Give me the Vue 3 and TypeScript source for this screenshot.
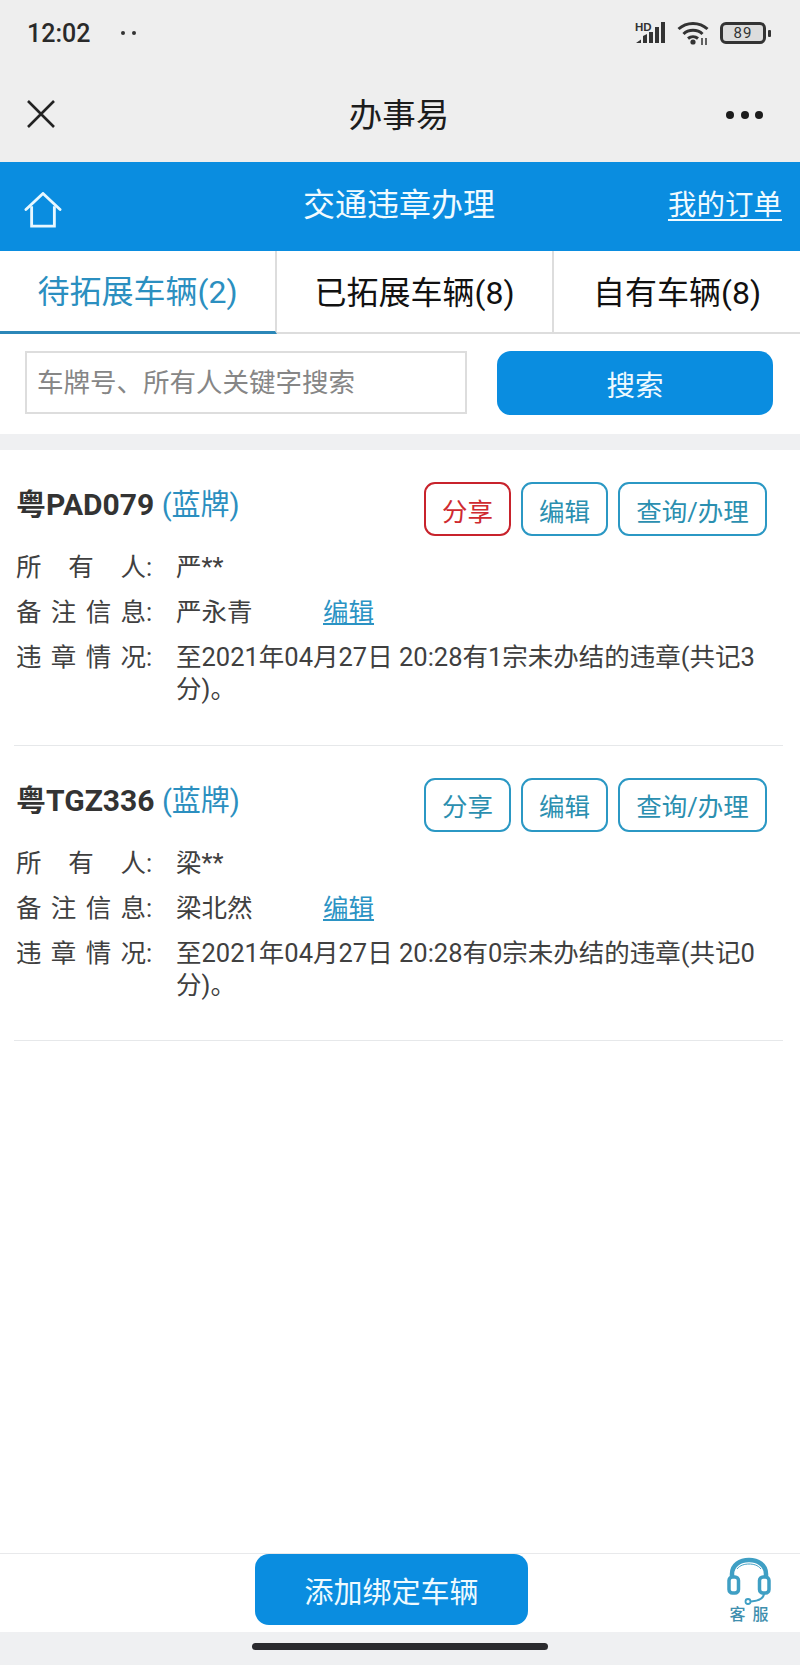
<script setup lang="ts">
interface Vehicle {
  plate: string
  owner: string
  note: string
  count: string
  points: string
  alert: boolean
}

const tabs = ['待拓展车辆(2)', '已拓展车辆(8)', '自有车辆(8)']
const vehicles: Vehicle[] = [
  { plate: '粤PAD079', owner: '严**', note: '严永青', count: '1', points: '3', alert: true },
  { plate: '粤TGZ336', owner: '梁**', note: '梁北然', count: '0', points: '0', alert: false },
]
</script>

<template>
  <div class="page">
    <div class="status">
      <span class="time">12:02</span>
      <span class="status-dots"><i></i><i></i></span>
      <span class="grow"></span>
      <svg class="signal" width="32" height="24" viewBox="0 0 32 24">
        <text x="0" y="10" class="hd">HD</text>
        <path d="M1 22l5-3.500V22z M8 22v-7l4-2v9z M14 22V11h4v11z M20 22V6h4v16z M26 22V1h4v21z" fill="#333" />
      </svg>
      <svg class="wifi" width="34" height="24" viewBox="0 0 34 24">
        <g fill="none" stroke="#333" stroke-width="3">
          <path d="M1.500 8C9.500 .5 22.500 .5 30.500 8" />
          <path d="M6.500 13C11.500 8 20.500 8 25.500 13" />
          <path d="M11 17.500C14 15 18 15 21 17.500" />
        </g>
        <circle cx="16" cy="21" r="2.600" fill="#333" />
        <path d="M25 24v-7M29 24v-7" stroke="#333" stroke-width="1.500" />
      </svg>
      <div class="battery"><span>89</span></div>
      <span class="tip"></span>
    </div>

    <div class="nav">
      <svg class="close" width="30" height="28" viewBox="0 0 30 28">
        <path d="M2 1l26 26M28 1L2 27" stroke="#222" stroke-width="2.600" fill="none" />
      </svg>
      <span class="nav-title">办事易</span>
      <span class="more"><i></i><i></i><i></i></span>
    </div>

    <header class="header">
      <svg class="home" width="38" height="36" viewBox="0 0 40 38">
        <path d="M2 18.500L20 1.500l18 17" fill="none" stroke="#e8f8ff" stroke-width="3" stroke-linecap="round" stroke-linejoin="round" />
        <path d="M8 15v21h24V15" fill="none" stroke="#e8f8ff" stroke-width="3" />
      </svg>
      <span class="header-title">交通违章办理</span>
      <a class="orders">我的订单</a>
    </header>

    <nav class="tabs">
      <div v-for="(tab, i) in tabs" :key="tab" class="tab" :class="{ active: i === 0 }"><span class="tab-text">{{ tab }}</span></div>
    </nav>

    <div class="search">
      <input class="search-input" placeholder="车牌号、所有人关键字搜索" />
      <button class="search-btn">搜索</button>
    </div>

    <div class="band"></div>

    <section v-for="v in vehicles" :key="v.plate" class="card">
      <div class="card-head">
        <div class="title"><b>{{ v.plate }}</b> <span class="plate-color">(蓝牌)</span></div>
        <div class="actions">
          <button class="act share" :class="{ alert: v.alert }">分享</button>
          <button class="act edit">编辑</button>
          <button class="act query">查询/办理</button>
        </div>
      </div>
      <div class="row">
        <div class="label"><span class="spread"><i>所</i><i>有</i><i>人</i></span>:</div>
        <div class="value">{{ v.owner }}</div>
      </div>
      <div class="row">
        <div class="label"><span class="spread"><i>备</i><i>注</i><i>信</i><i>息</i></span>:</div>
        <div class="value note"><span class="note-text">{{ v.note }}</span><a class="link">编辑</a></div>
      </div>
      <div class="row last">
        <div class="label"><span class="spread"><i>违</i><i>章</i><i>情</i><i>况</i></span>:</div>
        <div class="value">至2021年04月27日 20:28有{{ v.count }}宗未办结的违章(共记{{ v.points }}分)。</div>
      </div>
    </section>

    <div class="grow"></div>

    <footer class="footer">
      <button class="add-btn">添加绑定车辆</button>
      <div class="service">
        <svg width="46" height="48" viewBox="0 0 46 48">
          <path d="M6 21V17C6 8 14 3 23 3s17 5 17 14v4" fill="none" stroke="#3f9fc4" stroke-width="4.500" />
          <path d="M11 12C14 8 19 7 23 7s9 1 12 5" fill="none" stroke="#3f9fc4" stroke-width="1" />
          <rect x="3" y="20" width="9.500" height="16" rx="3.500" fill="#fff" stroke="#3f9fc4" stroke-width="3.500" />
          <rect x="33.500" y="20" width="9.500" height="16" rx="3.500" fill="#fff" stroke="#3f9fc4" stroke-width="3.500" />
          <path d="M38 36c0 5-5 8-13 8.500" fill="none" stroke="#3f9fc4" stroke-width="2" />
          <circle cx="22" cy="44.500" r="2.500" fill="#fff" stroke="#3f9fc4" stroke-width="1.800" />
        </svg>
        <span class="service-text">客 服</span>
      </div>
    </footer>

    <div class="home-area"><span class="home-bar"></span></div>
  </div>
</template>

<style>
body {
  margin: 0;
  background: #fff;
}
</style>

<style scoped>
.page {
  width: 800px;
  height: 1665px;
  display: flex;
  flex-direction: column;
  background: #fff;
  overflow: hidden;
  font-family: Roboto, "Noto Sans CJK SC", sans-serif;
  color: #333;
}
.grow {
  flex: 1;
}
button {
  font-family: inherit;
  cursor: pointer;
  padding: 0;
}
i {
  font-style: normal;
}

.status {
  height: 66px;
  padding: 0 29px 0 27px;
  display: flex;
  align-items: center;
  background: #eee;
  box-sizing: border-box;
}
.time {
  font-size: 25px;
  font-weight: 500;
  color: #2a2a2a;
}
.status-dots {
  display: flex;
  gap: 7px;
  margin-left: 31px;
}
.status-dots i {
  width: 4px;
  height: 4px;
  border-radius: 50%;
  background: #333;
}
.signal {
  margin-right: 10px;
  overflow: visible;
}
.hd {
  font: 700 11.500px "Liberation Sans", sans-serif;
  fill: #333;
}
.wifi {
  margin-right: 9px;
}
.battery {
  width: 46px;
  height: 22px;
  box-sizing: border-box;
  border: 3px solid #333;
  border-radius: 6px;
  background: #ddd;
  display: flex;
  align-items: center;
  justify-content: center;
  font-size: 15px;
  line-height: 16px;
  color: #333;
  letter-spacing: 1px;
}
.tip {
  width: 3px;
  height: 7px;
  margin-left: 2px;
  border-radius: 1px;
  background: #333;
}

.nav {
  height: 96px;
  padding: 0 37px 0 26px;
  box-sizing: border-box;
  display: grid;
  grid-template-columns: 1fr auto 1fr;
  align-items: center;
  background: #eee;
}
.nav-title {
  font-size: 33.500px;
  color: #1c1c1c;
  line-height: 1;
  margin: 3px 0 0 9px;
}
.more {
  justify-self: end;
  display: flex;
  gap: 6.500px;
  margin-top: 2px;
}
.more i {
  width: 8px;
  height: 8px;
  border-radius: 50%;
  background: #1c1c1c;
}

.header {
  height: 89px;
  padding: 0 18px 0 24px;
  box-sizing: border-box;
  display: grid;
  grid-template-columns: 1fr auto 1fr;
  align-items: center;
  background: #0a8de0;
  color: #f1fbff;
}
.home {
  margin-top: 7px;
}
.header-title {
  font-size: 32px;
  line-height: 1;
  margin-left: -8px;
  margin-top: -4px;
}
.orders {
  justify-self: end;
  font-size: 28.500px;
  line-height: 1;
  margin-top: -1px;
  text-decoration: underline;
  text-underline-offset: 4px;
}

.tabs {
  height: 83px;
  display: grid;
  grid-template-columns: 277px 277px 1fr;
  box-sizing: border-box;
  border-bottom: 2px solid #ddd;
}
.tab {
  height: 83px;
  box-sizing: border-box;
  display: flex;
  align-items: center;
  justify-content: center;
  font-size: 32px;
  color: #111;
  border-right: 2px solid #ddd;
  white-space: nowrap;
}
.tab-text {
  margin-top: -5px;
}
.tab:last-child {
  border-right: 0;
}
.tab.active {
  color: #2b8fc0;
  border-bottom: 3px solid #2b87b8;
}

.search {
  height: 100px;
  padding: 17px 27px 19px 25px;
  box-sizing: border-box;
  display: flex;
  justify-content: space-between;
}
.search-input {
  width: 442px;
  height: 63px;
  box-sizing: border-box;
  border: 2.500px solid #ddd;
  border-radius: 0;
  padding: 0 10px;
  outline: none;
  font-family: inherit;
  font-size: 26.500px;
  background: #fff;
}
.search-input::placeholder {
  color: #868686;
  opacity: 1;
}
.search-btn {
  width: 276px;
  height: 64px;
  border: 0;
  border-radius: 14px;
  background: #0a8de0;
  color: #eefaff;
  font-size: 28.500px;
}

.band {
  height: 16px;
  background: #eff0f2;
}

.card {
  height: 295.500px;
  margin: 0 17px 0 14px;
  box-sizing: border-box;
  padding: 32px 16px 0 2px;
  border-bottom: 1px solid #e6e8ea;
}
.card-head {
  height: 54px;
  display: flex;
  justify-content: space-between;
  align-items: flex-start;
  margin-bottom: 15px;
}
.title {
  font-size: 30px;
  line-height: 40px;
  margin-top: 3px;
  white-space: nowrap;
}
.title b {
  color: #333;
  font-weight: 700;
}
.plate-color {
  color: #2b8fc0;
  font-size: 29px;
}
.actions {
  display: flex;
  gap: 10px;
}
.act {
  height: 54px;
  box-sizing: border-box;
  border: 2.500px solid #2b98c4;
  border-radius: 11px;
  background: #fff;
  color: #2b8fb0;
  font-size: 25.500px;
}
.share,
.edit {
  width: 87px;
}
.query {
  width: 149px;
}
.act.alert {
  border-color: #c8232c;
  color: #cf2a30;
}

.row {
  display: flex;
  font-size: 25.500px;
  line-height: 32px;
  color: #404040;
  margin-bottom: 13px;
}
.label {
  width: 160px;
  flex: none;
  display: flex;
}
.spread {
  width: 130px;
  display: flex;
  justify-content: space-between;
}
.value {
  flex: 1;
  word-break: break-all;
}
.note {
  display: flex;
}
.note-text {
  width: 147px;
}
.link {
  color: #2b93c4;
  text-decoration: underline;
}

.footer {
  height: 79px;
  box-sizing: border-box;
  border-top: 1px solid #e8e9eb;
  display: grid;
  grid-template-columns: 255px 273px 1fr;
  background: #fff;
}
.add-btn {
  grid-column: 2;
  width: 273px;
  height: 71px;
  border: 0;
  border-radius: 14px;
  background: #0a8de0;
  color: #eefaff;
  font-size: 29px;
}
.service {
  grid-column: 3;
  justify-self: end;
  width: 46px;
  margin-right: 28px;
  margin-top: 3px;
  display: flex;
  flex-direction: column;
  align-items: center;
}
.service svg {
  display: block;
}
.service-text {
  margin-top: 1px;
  font-size: 16px;
  line-height: 18px;
  font-weight: 500;
  word-spacing: 3px;
  color: #3f8fae;
  white-space: nowrap;
}

.home-area {
  flex: none;
  height: 33px;
  background: #eff0f2;
  display: flex;
  justify-content: center;
  padding-top: 11px;
  box-sizing: border-box;
}
.home-bar {
  width: 296px;
  height: 7px;
  border-radius: 4px;
  background: #2a2a2e;
}
</style>
